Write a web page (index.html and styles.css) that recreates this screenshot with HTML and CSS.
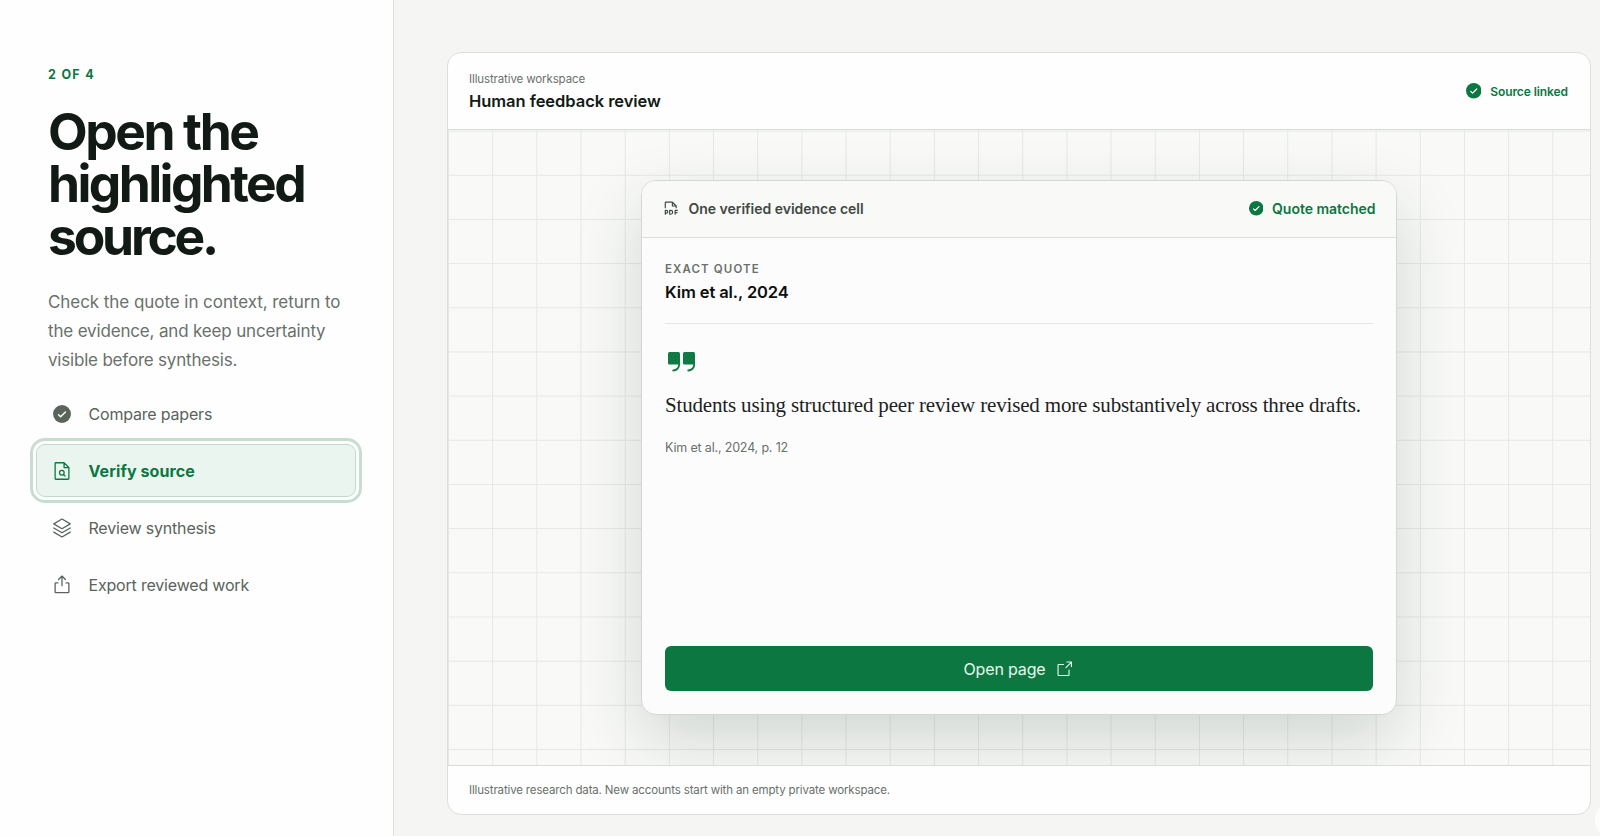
FILE: index.html
```
<!DOCTYPE html>
<html lang="en">
<head>
<meta charset="utf-8">
<title>Open the highlighted source</title>
<link rel="stylesheet" href="styles.css">
</head>
<body>
<div class="page">
  <aside class="guide">
    <p class="eyebrow">2 OF 4</p>
    <h1 class="headline"><span class="line-one">Open the</span><br><span class="line-two">highlighted</span><br><span class="line-three">source.</span></h1>
    <p class="lead"><span class="lead-one">Check the quote in context, return to</span><br>the evidence, and keep uncertainty<br><span class="lead-three">visible before synthesis.</span></p>
    <nav class="steps">
      <a class="step"><svg class="step-icon" viewBox="0 0 256 256"><path class="solid" d="M128 24a104 104 0 1 0 0 208 104 104 0 0 0 0-208z"/><path class="tick" d="M88 136l24 24 56-56"/></svg><span>Compare papers</span></a>
      <a class="step active"><svg class="step-icon" viewBox="0 0 256 256"><path d="M200 224H56a8 8 0 0 1-8-8V40a8 8 0 0 1 8-8h96l56 56v128a8 8 0 0 1-8 8zM152 32v56h56M144 168l20 20"/><circle cx="126" cy="148" r="27"/></svg><span>Verify source</span></a>
      <a class="step"><svg class="step-icon" viewBox="0 0 256 256"><path d="M32 176l96 56 96-56M32 128l96 56 96-56M32 80l96 56 96-56-96-56z"/></svg><span>Review synthesis</span></a>
      <a class="step"><svg class="step-icon" viewBox="0 0 256 256"><path d="M88 64l40-40 40 40M128 136V24M176 104h24a8 8 0 0 1 8 8v96a8 8 0 0 1-8 8H56a8 8 0 0 1-8-8v-96a8 8 0 0 1 8-8h24"/></svg><span>Export reviewed work</span></a>
    </nav>
  </aside>
  <main class="stage">
    <section class="workspace">
      <header class="workspace-head">
        <div>
          <p class="kicker">Illustrative workspace</p>
          <h2 class="title">Human feedback review</h2>
        </div>
        <div class="linked"><svg class="linked-icon" viewBox="0 0 208 208"><circle class="solid" cx="104" cy="104" r="104"/><path class="tick" d="M64 112l24 24 56-56"/></svg><span>Source linked</span></div>
      </header>
      <div class="canvas">
        <article class="card">
          <header class="card-head">
            <div class="card-label"><svg class="pdf-icon" viewBox="0 0 256 256"><path d="M48 112V40a8 8 0 0 1 8-8h96l56 56v24M152 32v56h56M224 152h-32v56M220 184h-28M48 192h16a20 20 0 0 0 0-40H48v56M112 152v56h16a28 28 0 0 0 0-56z"/></svg><span>One verified evidence cell</span></div>
            <div class="matched"><svg class="matched-icon" viewBox="0 0 208 208"><circle class="solid" cx="104" cy="104" r="104"/><path class="tick" d="M64 112l24 24 56-56"/></svg><span>Quote matched</span></div>
          </header>
          <div class="card-body">
            <div class="source">
              <p class="source-label">EXACT QUOTE</p>
              <p class="source-name">Kim et al., 2024</p>
            </div>
            <svg class="quote-icon" viewBox="0 0 27 20"><rect x="0" y="0" width="12" height="12.5" rx="1.5"/><rect x="15" y="0" width="12" height="12.5" rx="1.5"/><path d="M11.200 8v4.500a6 6 0 0 1-6 6M26.200 8v4.500a6 6 0 0 1-6 6"/></svg>
            <blockquote class="quote">Students using structured peer review revised more substantively across three drafts.</blockquote>
            <p class="cite">Kim et al., 2024, p. 12</p>
            <button class="open"><span>Open page</span><svg class="open-icon" viewBox="0 0 256 256"><path d="M216 100V40h-60M144 112l72-72M184 144v64a8 8 0 0 1-8 8H48a8 8 0 0 1-8-8V80a8 8 0 0 1 8-8h64"/></svg></button>
          </div>
        </article>
      </div>
      <footer class="workspace-foot">Illustrative research data. New accounts start with an empty private workspace.</footer>
    </section>
  </main>
  <div class="edge-button"></div>
</div>
</body>
</html>
```
FILE: styles.css
```
* { box-sizing: border-box; margin: 0; }
body { font-family: Inter, "Liberation Sans", sans-serif; background: #f5f5f4; color: #121a15; }
svg { fill: none; stroke: currentColor; stroke-width: 15; stroke-linecap: round; stroke-linejoin: round; flex: none; display: block; }
.solid { fill: currentColor; stroke: none; }
.tick { stroke: #fff; stroke-width: 17; }
p, h1, h2, blockquote, span { white-space: nowrap; }
.page { position: relative; display: flex; height: 836px; overflow: hidden; }
.guide { width: 394px; flex: none; background: #fefefe; border-right: 1px solid #dcdedc; padding: 64px 37px 0 36px; }
.eyebrow { padding: 1px 0 0 12px; font-size: 12.5px; line-height: 19px; font-weight: 700; color: #0b7741; letter-spacing: 1.3px; }
.headline { padding-left: 12px; margin-top: 20.500px; font-size: 51.5px; line-height: 52.8px; font-weight: 700; }
.line-one { letter-spacing: -2.4px; }
.line-two { letter-spacing: -2.6px; }
.line-three { letter-spacing: -3.2px; }
.lead { padding-left: 12px; margin-top: 25.600px; font-size: 17px; line-height: 28.8px; color: #69716b; letter-spacing: -.166px; }
.lead-one { letter-spacing: -.058px; }
.lead-three { letter-spacing: -.2px; }
.steps { display: flex; flex-direction: column; gap: 4px; margin-top: 12.500px; }
.step { display: flex; align-items: center; height: 53px; padding-left: 14px; gap: 15.500px; font-size: 16px; letter-spacing: -.19px; color: #5a635c; border: 1px solid transparent; border-radius: 9px; }
.step-icon { width: 22px; height: 22px; }
.step.active { background: #ebf5ef; border-color: #c3d9cd; outline: 3px solid #c8ddd2; outline-offset: 3px; color: #0b7741; font-weight: 700; letter-spacing: .11px; }
.stage { flex: 1; padding: 52px 9px 21px 53px; min-width: 0; }
.workspace { height: 763px; display: flex; flex-direction: column; background: #fefefe; border: 1px solid #dddfdd; border-radius: 14px; overflow: hidden; }
.workspace-head { height: 77px; display: flex; align-items: center; justify-content: space-between; padding: 0 22px 0 21px; border-bottom: 1px solid #d9dcd9; }
.kicker { margin-top: 2px; font-size: 11.5px; line-height: 17px; color: #69716b; letter-spacing: -.122px; }
.title { margin-top: 1px; font-size: 16.5px; line-height: 24px; font-weight: 600; letter-spacing: -.05px; }
.linked { display: flex; align-items: center; gap: 9px; font-size: 12px; font-weight: 600; color: #0b7741; letter-spacing: -.08px; }
.linked-icon { width: 15.500px; height: 15.500px; }
.canvas { flex: 1; padding: 50px 193.500px 0 193px; background: linear-gradient(90deg, #e5e8e5 1px, transparent 1px), linear-gradient(#e5e8e5 1px, transparent 1px), #f9faf8; background-position: 0 .6px; background-size: 44.18px 44.18px; overflow: hidden; }
.card { height: 535px; display: flex; flex-direction: column; background: #fcfcfc; border: 1px solid #d3d7d4; border-radius: 15px; overflow: hidden; box-shadow: 0 26px 66px rgba(20, 40, 28, .17); }
.card-head { height: 57px; display: flex; align-items: center; justify-content: space-between; padding: 0 20px 1px; background: #f9faf8; border-bottom: 1px solid #dcdfdc; font-size: 14px; font-weight: 600; letter-spacing: -.02px; }
.card-label, .matched { display: flex; align-items: center; gap: 9px; }
.card-label { color: #414943; }
.pdf-icon { width: 17.500px; height: 17.500px; stroke-width: 17; }
.matched { color: #0b7741; }
.matched-icon { width: 14.500px; height: 14.500px; }
.card-body { flex: 1; display: flex; flex-direction: column; padding: 22px 23px 23px; }
.source { padding-bottom: 19px; border-bottom: 1px solid #e3e6e4; }
.source-label { font-size: 11.5px; line-height: 18px; font-weight: 600; color: #69716b; letter-spacing: 1.12px; }
.source-name { margin-top: 2px; font-size: 16.5px; line-height: 24px; font-weight: 600; color: #0c0f0d; letter-spacing: -.09px; }
.quote-icon { width: 27px; height: 20px; margin: 28px 0 0 3px; color: #0f7a43; stroke-width: 1.8; }
.quote-icon rect { fill: currentColor; stroke: none; }
.quote { margin-top: 17px; font: 21px/32px "Liberation Serif", serif; color: #1c231e; letter-spacing: -.163px; }
.cite { margin-top: 18px; font-size: 12.5px; line-height: 18px; color: #69716b; letter-spacing: -.17px; }
.open { margin-top: auto; height: 45px; display: flex; align-items: center; justify-content: center; gap: 9px; border: 0; border-radius: 6px; background: #0d7741; color: #e6f8ec; font: 16px Inter, sans-serif; letter-spacing: -.155px; }
.open-icon { width: 19.500px; height: 19.500px; }
.workspace-foot { height: 49px; display: flex; align-items: center; padding-left: 21px; border-top: 1px solid #d9dcd9; font-size: 11.5px; color: #69716b; letter-spacing: -.15px; }
.edge-button { position: absolute; left: 1595px; top: 800px; width: 40px; height: 40px; border-radius: 50%; background: #fdfdfd; }
```
